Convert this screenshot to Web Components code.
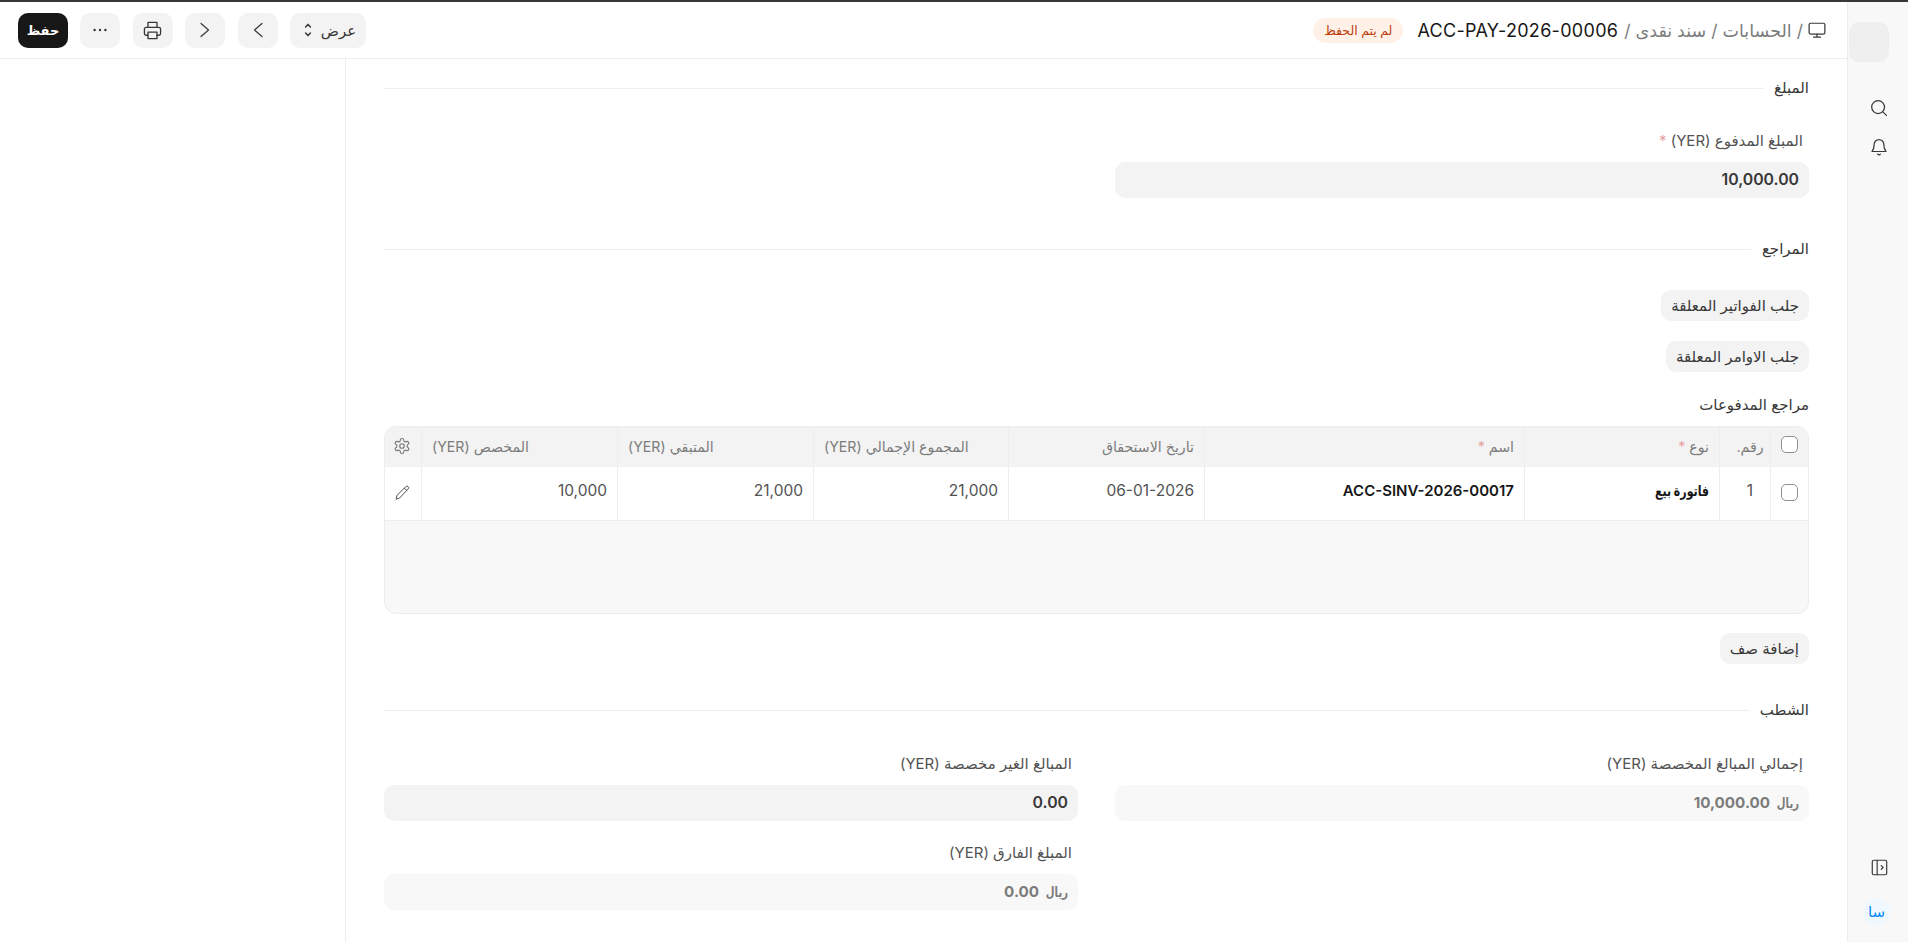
<!DOCTYPE html>
<html dir="rtl" lang="ar">
<head>
<meta charset="utf-8">
<title>سند نقدى</title>
<style>
html,body{margin:0;padding:0;height:100%;overflow:hidden;background:#fff}
body{font-family:"Noto Sans","DejaVu Sans",sans-serif;font-size:15px;color:#171717}
</style>
</head>
<body>
<app-shell>
  <side-rail slot="rail"></side-rail>
  <top-bar slot="top"></top-bar>
  <form-page slot="form"></form-page>
</app-shell>
<script>
const FONT='"Inter","Noto Sans","DejaVu Sans",sans-serif';
const svg=(inner,size=16,sw=1.2,vb=16)=>`<svg xmlns="http://www.w3.org/2000/svg" width="${size}" height="${size}" viewBox="0 0 ${vb} ${vb}" fill="none" stroke="currentColor" stroke-width="${sw}" stroke-linecap="round" stroke-linejoin="round">${inner}</svg>`;
const ICONS={
 monitor:svg('<rect x="1" y="2" width="14" height="9.6" rx="1.4"/><path d="M8 11.6V14.4M5 14.4H11"/>',18,1.1),
 search:svg('<circle cx="7.2" cy="7.2" r="5.7"/><path d="M11.4 11.4L14.6 14.6"/>',18,1.1),
 bell:svg('<path d="M8 1.4a4.3 4.3 0 0 0-4.3 4.3c0 3.8-1.6 5.9-1.9 6.3h12.4c-.3-.4-1.9-2.5-1.9-6.3A4.3 4.3 0 0 0 8 1.4z"/><path d="M6.8 14.3a1.5 1.5 0 0 0 2.4 0"/>',18,1.1),
 panel:svg('<rect x="1.2" y="1.2" width="13.6" height="13.6" rx="1.4"/><path d="M5.8 1.2V14.8M9.6 6.2L11.4 8L9.6 9.8"/>',17,1.1),
 gear:svg('<path d="M12.22 2h-.44a2 2 0 0 0-2 2v.18a2 2 0 0 1-1 1.73l-.43.25a2 2 0 0 1-2 0l-.15-.08a2 2 0 0 0-2.73.73l-.22.38a2 2 0 0 0 .73 2.73l.15.1a2 2 0 0 1 1 1.72v.51a2 2 0 0 1-1 1.74l-.15.09a2 2 0 0 0-.73 2.73l.22.38a2 2 0 0 0 2.73.73l.15-.08a2 2 0 0 1 2 0l.43.25a2 2 0 0 1 1 1.73V20a2 2 0 0 0 2 2h.44a2 2 0 0 0 2-2v-.18a2 2 0 0 1 1-1.73l.43-.25a2 2 0 0 1 2 0l.15.08a2 2 0 0 0 2.73-.73l.22-.39a2 2 0 0 0-.73-2.73l-.15-.08a2 2 0 0 1-1-1.74v-.5a2 2 0 0 1 1-1.74l.15-.09a2 2 0 0 0 .73-2.73l-.22-.38a2 2 0 0 0-2.73-.73l-.15.08a2 2 0 0 1-2 0l-.43-.25a2 2 0 0 1-1-1.73V4a2 2 0 0 0-2-2z"/><circle cx="12" cy="12" r="3"/>',18,1.6,24),
 pencil:svg('<path d="M11.7 1.7a1.6 1.6 0 0 1 2.5 2.2L5.6 13l-3.5 1.2.9-3.6z"/><path d="M10.3 3.2l2.5 2.3"/>',16,1),
 print:svg('<path d="M4.2 5.4V1.2h7.6v4.2"/><path d="M4.2 12H2.6a1.4 1.4 0 0 1-1.4-1.4V6.8a1.4 1.4 0 0 1 1.4-1.4h10.8a1.4 1.4 0 0 1 1.4 1.4v3.8a1.4 1.4 0 0 1-1.4 1.4H11.8"/><rect x="4.2" y="9.4" width="7.6" height="5.4"/>',19,1.1),
 left:svg('<path d="M12 1.5L4.5 8L12 14.5"/>',16,1.2),
 right:svg('<path d="M4 1.5L11.5 8L4 14.5"/>',16,1.2),
 dots:`<svg xmlns="http://www.w3.org/2000/svg" width="16" height="16" viewBox="0 0 16 16" fill="currentColor"><circle cx="2.6" cy="8" r="1.2"/><circle cx="8" cy="8" r="1.2"/><circle cx="13.4" cy="8" r="1.2"/></svg>`,
 updown:svg('<path d="M5.6 5L8 2.4L10.4 5M5.6 11L8 13.6L10.4 11"/>',16,1.5)
};
function comp(name,html){
  customElements.define(name,class extends HTMLElement{
    constructor(){super();const r=this.attachShadow({mode:'open'});
      r.innerHTML=typeof html==='function'?html(this):html;}
  });
}
comp('app-shell',`<style>
:host{display:flex;flex-direction:row;height:100vh;width:100%;font-family:${FONT};box-sizing:border-box;border-top:2px solid #383838}
.rail{flex:0 0 61px;display:flex}
.main{flex:1;min-width:0;display:flex;flex-direction:column}
.top{flex:0 0 auto}
.body{flex:1;display:flex;min-height:0}
.blank{flex:0 0 346px;box-sizing:border-box;border-right:1px solid #ededed;order:2}
.form{flex:1;min-width:0;order:1}
</style>
<div class="rail"><slot name="rail"></slot></div>
<div class="main"><div class="top"><slot name="top"></slot></div>
<div class="body"><div class="form"><slot name="form"></slot></div><div class="blank"></div></div></div>`);

comp('icon-btn',el=>`<style>
:host{display:inline-flex;align-items:center;justify-content:center;height:35px;width:40px;border-radius:10px;background:#f3f3f3;color:#383838;box-sizing:border-box;gap:5px;font-size:15px}
:host([wide]){width:76px}
:host([primary]){width:50px;background:#171717;color:#fff;font-weight:700;font-size:13px}
</style><slot></slot>${el.getAttribute('icon')?ICONS[el.getAttribute('icon')]:''}`);

comp('top-bar',`<style>
:host{display:flex;align-items:center;justify-content:space-between;height:57px;box-sizing:border-box;border-bottom:1px solid #ededed;padding:0 21px 0 18px;background:#fff}
.crumbs{display:flex;align-items:center;gap:5px;color:#7c7c7c;font-size:17.5px}
.crumbs svg{color:#383838;display:block}
.title{color:#171717;font-size:18px;letter-spacing:.3px;direction:ltr;margin:0 1px}
.badge{background:#fff1e7;color:#bd3e0c;font-size:12.5px;height:25px;padding:0 11px;border-radius:13px;display:flex;align-items:center;margin-right:8px}
.acts{display:flex;align-items:center;gap:12.4px}
</style>
<div class="crumbs">${ICONS.monitor}<span>/</span><span>الحسابات</span><span>/</span><span>سند نقدى</span><span>/</span><span class="title">ACC-PAY-2026-00006</span><span class="badge">لم يتم الحفظ</span></div>
<div class="acts">
<icon-btn wide icon="updown">عرض</icon-btn>
<icon-btn icon="left"></icon-btn>
<icon-btn icon="right"></icon-btn>
<icon-btn icon="print"></icon-btn>
<icon-btn icon="dots"></icon-btn>
<icon-btn primary>حفظ</icon-btn>
</div>`);

comp('side-rail',`<style>
:host{display:flex;flex-direction:column;align-items:flex-end;width:61px;height:100%;box-sizing:border-box;background:#f8f8f8;border-left:1px solid #ededed;color:#383838;padding:20px 0 17px}
.logo{width:40px;height:40px;border-radius:10px;background:#efefef;margin-bottom:37px;margin-left:1px}
.ic{height:18px;display:flex;margin-bottom:21px;margin-left:22px}
.sp{flex:1}
.av{width:27px;height:27px;border-radius:50%;background:#eff8ff;color:#0289f7;font-size:15px;display:flex;align-items:center;justify-content:center;margin-top:22px;margin-left:15px}
</style>
<div class="logo"></div><div class="ic">${ICONS.search}</div><div class="ic">${ICONS.bell}</div><div class="sp"></div><div class="ic" style="margin-bottom:0;height:17px;margin-left:23px">${ICONS.panel}</div><div class="av">سا</div>`);

comp('section-head',`<style>
:host{display:flex;align-items:center;height:20px;gap:11px;font-size:15px;color:#383838}
span{padding-bottom:2px}
i{flex:1;height:1px;background:#ededed}
</style><span><slot></slot></span><i></i>`);

comp('data-field',el=>`<style>
:host{display:block}
.l{height:20px;line-height:20px;font-size:15px;color:#525252;padding-right:6px;margin-bottom:11px}
.l b{color:#e9a0a0;font-weight:400}
.v{height:35.5px;box-sizing:border-box;border-radius:10px;background:#f8f8f8;color:#7c7c7c;font-weight:700;font-size:15.2px;display:flex;align-items:center;padding:0 10px;gap:6px}
:host([strong]) .v{background:#f3f3f3;color:#383838;font-weight:600;font-size:15.8px}
</style><div class="l"><slot name="label"></slot>${el.hasAttribute('req')?' <b>*</b>':''}</div><div class="v"><slot></slot></div>`);

comp('pill-btn',`<style>
:host{display:inline-flex;align-items:center;height:31px;box-sizing:border-box;padding:0 10px;border-radius:10px;background:#f3f3f3;color:#383838;font-size:15px}
</style><slot></slot>`);

comp('grid-row',`<style>
:host{display:grid;grid-template-columns:38px 51px 195px 320px 196px 195px 196px 196px 38px;color:#525252;font-size:15.5px;height:100%}
</style><slot></slot>`);
comp('grid-cell',`<style>
:host{display:flex;align-items:center;padding:0 10px;box-sizing:border-box;border-left:1px solid #ededed;min-width:0}
:host([last]){border-left:0;justify-content:center;padding:0;color:#525252}
:host([center]){justify-content:center;padding:0}
:host([shift]){padding-left:10px}
:host([b]){font-weight:600;color:#171717;font-size:15px}
:host([h]){color:#7c7c7c;font-size:14.2px;padding-bottom:2px}
:host([end]){justify-content:flex-end}
:host([up]){padding-bottom:6px}
:host([up1]){padding-bottom:2px}
:host([up2]){padding-bottom:6px}
</style><slot></slot>`);
comp('check-box',`<style>
:host{display:block;width:17px;height:17px;box-sizing:border-box;border:1px solid #8f8f8f;border-radius:5px;background:#fff}
</style>`);
comp('ar-bold',`<style>
:host{display:inline-block;font-weight:700;font-size:14.5px;transform:scaleX(.76);transform-origin:100% 50%;white-space:nowrap}
</style><slot></slot>`);
comp('cur-tag',`<style>
:host{display:inline-block;width:23px;font-weight:700;font-size:14px;transform:scaleX(.72);transform-origin:100% 50%;white-space:nowrap}
</style><slot></slot>`);
const cell=(t,a='')=>`<grid-cell ${a}>${t}</grid-cell>`;
comp('ref-table',`<style>
:host{display:block;box-sizing:border-box;height:188px;border:1px solid #ededed;border-radius:12px;background:#f8f8f8;overflow:hidden}
.head{height:40px;background:#f3f3f3;display:block}
.row{height:54px;background:#fff;border-bottom:1px solid #ededed;display:block;box-sizing:border-box}
b{color:#e9a0a0;font-weight:400}
</style>
<div class="head"><grid-row>
${cell('<check-box></check-box>','center up2')}
${cell('رقم.','center shift h')}
${cell('نوع&nbsp;<b>*</b>','h')}
${cell('اسم&nbsp;<b>*</b>','h')}
${cell('تاريخ الاستحقاق','h')}
${cell('المجموع الإجمالي (YER)','h end')}
${cell('المتبقي (YER)','h end')}
${cell('المخصص (YER)','h end')}
${cell(ICONS.gear,'last h')}
</grid-row></div>
<div class="row"><grid-row>
${cell('<check-box></check-box>','center up1')}
${cell('1','center shift up')}
${cell('<ar-bold>فاتورة بيع</ar-bold>','b up')}
${cell('ACC-SINV-2026-00017','b up')}
${cell('06-01-2026','up')}
${cell('21,000','up')}
${cell('21,000','up')}
${cell('10,000','up')}
${cell(ICONS.pencil,'last up1')}
</grid-row></div>`);

comp('form-page',`<style>
:host{display:block;padding:19px 38px 0;color:#171717}
.row{display:grid;grid-template-columns:694px 694px;gap:37px}
.st{display:flex;flex-direction:column;align-items:flex-start}
.t{height:20px;line-height:20px;font-size:15px;color:#383838}
</style>
<section-head>المبلغ</section-head>
<div class="row" style="margin-top:33px"><data-field req strong><span slot="label">المبلغ المدفوع (YER)</span>10,000.00</data-field></div>
<section-head style="margin-top:42px">المراجع</section-head>
<div class="st" style="margin-top:30.5px;gap:20px"><pill-btn>جلب الفواتير المعلقة</pill-btn><pill-btn>جلب الاوامر المعلقة</pill-btn></div>
<div class="t" style="margin-top:23px">مراجع المدفوعات</div>
<ref-table style="margin-top:11px"></ref-table>
<div class="st" style="margin-top:19px"><pill-btn>إضافة صف</pill-btn></div>
<section-head style="margin-top:36px">الشطب</section-head>
<div class="row" style="margin-top:34px">
<data-field><span slot="label">إجمالي المبالغ المخصصة (YER)</span><cur-tag>ريال</cur-tag><span>10,000.00</span></data-field>
<div class="st" style="align-items:stretch;gap:22.5px">
<data-field strong><span slot="label">المبالغ الغير مخصصة (YER)</span>0.00</data-field>
<data-field><span slot="label">المبلغ الفارق (YER)</span><cur-tag>ريال</cur-tag><span>0.00</span></data-field>
</div></div>`);
</script>
</body>
</html>
